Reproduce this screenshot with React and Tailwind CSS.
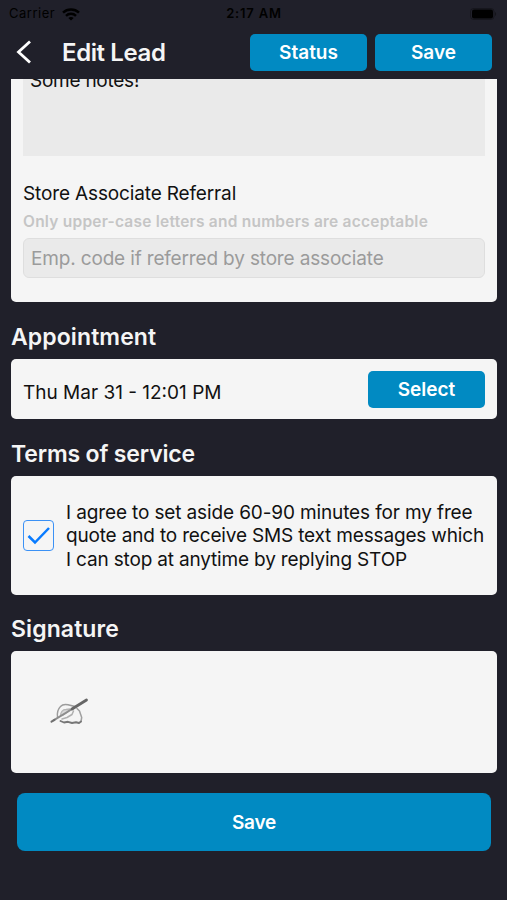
import { useState } from "react";

function StatusBar() {
  return (
    <div className="h-[28px] pl-[9px] pr-[10px] grid grid-cols-3 items-center text-[13px] text-black">
      <div className="flex items-center gap-[7px]">
        <span className="tracking-[0.5px]">Carrier</span>
        <svg width="18" height="13" viewBox="0 0 18 13" fill="none" stroke="currentColor" strokeWidth="2.5">
          <path d="M1 4.6C5.4 0.4 12.6 0.4 17 4.6" />
          <path d="M4 7.8C6.8 5.2 11.2 5.2 14 7.8" />
          <path d="M9 12.6L6.3 10C7.8 8.7 10.2 8.7 11.7 10Z" fill="currentColor" stroke="none" />
        </svg>
      </div>
      <span className="pl-[2px] text-center font-semibold tracking-[0.8px] whitespace-nowrap">2:17 AM</span>
      <div className="flex justify-end items-center">
        <svg width="27" height="12" viewBox="0 0 27 12">
          <rect x="0.5" y="0.5" width="23.5" height="11" rx="3" fill="none" stroke="#000" strokeOpacity="0.3" />
          <rect x="2" y="1.5" width="21" height="9" rx="2" fill="#000" />
          <path d="M25 4v4c1.4-.6 1.4-3.4 0-4z" fill="#000" fillOpacity="0.4" />
        </svg>
      </div>
    </div>
  );
}

function ActionButton({ text, onClick }) {
  return (
    <button
      onClick={onClick}
      className="w-[117px] h-[37px] rounded-[5px] bg-[#018ac2] text-white text-[19px] font-semibold leading-none"
    >
      {text}
    </button>
  );
}

function PenIcon() {
  return (
    <svg width="40" height="28" viewBox="0 0 40 28" fill="none" strokeLinecap="round" strokeLinejoin="round">
      <path d="M7.5 19C7 15 8 11 10.500 8.500C12.500 6.300 15 6.200 18 6.800L25 8.500" stroke="#9c9c9c" strokeWidth="1.4" />
      <path d="M27 10.500L29.500 13L31.700 19.500L31 23.500" stroke="#a0a0a0" strokeWidth="1.5" />
      <path d="M10.500 18C10.500 14.500 12.500 11.500 16 11.500L20 11L17 14.500L12.500 17.500" fill="#d8d8d8" stroke="#b5b5b5" strokeWidth="1.3" />
      <path d="M12 21L17 19.500L22 16.500L23.500 13" stroke="#b0b0b0" strokeWidth="1.5" />
      <path d="M10.500 23L14 24.500L18 23.800L22 25L26 24.300L29 25L31 23.500" stroke="#777" strokeWidth="1.9" />
      <path d="M3.500 22.300L23 10.500" stroke="#8d8d8d" strokeWidth="2" />
      <path d="M1.500 23.700L4.500 21.800" stroke="#707070" strokeWidth="2" />
      <path d="M22 11L36.500 2" stroke="#666" strokeWidth="2.8" />
    </svg>
  );
}

export default function App() {
  const [agreed, setAgreed] = useState(true);
  const [code, setCode] = useState("");

  return (
    <div className="w-full h-[900px] overflow-hidden bg-[#20202a] font-[Inter,sans-serif] text-[#111]">
      <StatusBar />
      <header className="h-[51px] pl-[16px] pr-[15px] flex items-center">
        <button aria-label="Back" className="-mt-[3px]">
          <svg width="16" height="24" viewBox="0 0 16 24" fill="none" stroke="#fff" strokeWidth="2.8">
            <path d="M14 1.5L2.5 12L14 22.5" />
          </svg>
        </button>
        <h1 className="ml-[30px] -mt-[2px] text-[24px] font-semibold text-[#f5f5f5] tracking-[-0.4px]">Edit Lead</h1>
        <div className="ml-auto -mt-[2px] flex gap-[8px]">
          <ActionButton text="Status" />
          <ActionButton text="Save" />
        </div>
      </header>

      <main className="pl-[11px] pr-[10px]">
        <section className="h-[223px] px-[12px] overflow-hidden rounded-b-[5px] bg-[#f5f5f5]">
          <div className="h-[77px] px-[7px] overflow-hidden bg-[#eaeaea] text-[19px] tracking-[-0.25px]">
            <p className="-mt-[12px] leading-[28px]">Some notes!</p>
          </div>
          <label htmlFor="code" className="block mt-[26px] text-[19px] leading-[24px] tracking-[-0.14px]">
            Store Associate Referral
          </label>
          <p className="mt-[6px] text-[15.5px] leading-[20px] font-semibold tracking-[0.23px] text-[#c5c5c5]">
            Only upper-case letters and numbers are acceptable
          </p>
          <input
            id="code"
            value={code}
            onChange={(e) => setCode(e.target.value)}
            placeholder="Emp. code if referred by store associate"
            className="block mt-[6px] w-full h-[40px] px-[7px] pt-px rounded-[6px] border border-[#dedede] bg-[#eaeaea] text-[19px] tracking-[-0.16px] placeholder:text-[#9b9b9b]"
          />
        </section>

        <h2 className="mt-[21px] text-[23px] leading-[28px] font-semibold tracking-[0.1px] text-[#f5f5f5]">Appointment</h2>
        <section className="mt-[8px] h-[60px] px-[12px] flex justify-between items-center rounded-[5px] bg-[#f5f5f5]">
          <span className="mt-[8px] text-[19px]">Thu Mar 31 - 12:01 PM</span>
          <ActionButton text="Select" />
        </section>

        <h2 className="mt-[21px] text-[23px] leading-[28px] font-semibold tracking-[-0.15px] text-[#f5f5f5]">Terms of service</h2>
        <section className="mt-[8px] h-[119px] px-[12px] flex items-center rounded-[5px] bg-[#f5f5f5]">
          <button
            role="checkbox"
            aria-checked={agreed}
            aria-label="Agree"
            onClick={() => setAgreed(!agreed)}
            className="w-[31px] h-[31px] shrink-0 flex items-center justify-center rounded-[4px] border border-[#3b91f5]"
          >
            {agreed && (
              <svg width="23" height="18" viewBox="0 0 23 18" fill="none" stroke="#087bff" strokeWidth="2.5">
                <path d="M1.5 9L8 15.5L22 1" />
              </svg>
            )}
          </button>
          <p className="ml-[12px] mt-px text-[19px] leading-[23.4px] tracking-[-0.17px] whitespace-nowrap">
            <span className="tracking-[-0.13px]">I agree to set aside 60-90 minutes for my free</span>
            <br />
            quote and to receive SMS text messages which
            <br />I can stop at anytime by replying STOP
          </p>
        </section>

        <h2 className="mt-[20px] text-[23px] leading-[28px] font-semibold tracking-[0.1px] text-[#f5f5f5]">Signature</h2>
        <section className="mt-[8px] h-[122px] px-[39px] flex items-center rounded-[5px] bg-[#f5f5f5]">
          <PenIcon />
        </section>

        <button className="block mt-[20px] mx-[6px] w-[474px] h-[58px] pt-[2px] rounded-[8px] bg-[#018ac2] text-white text-[19px] font-semibold tracking-[-0.2px]">
          Save
        </button>
      </main>
    </div>
  );
}
